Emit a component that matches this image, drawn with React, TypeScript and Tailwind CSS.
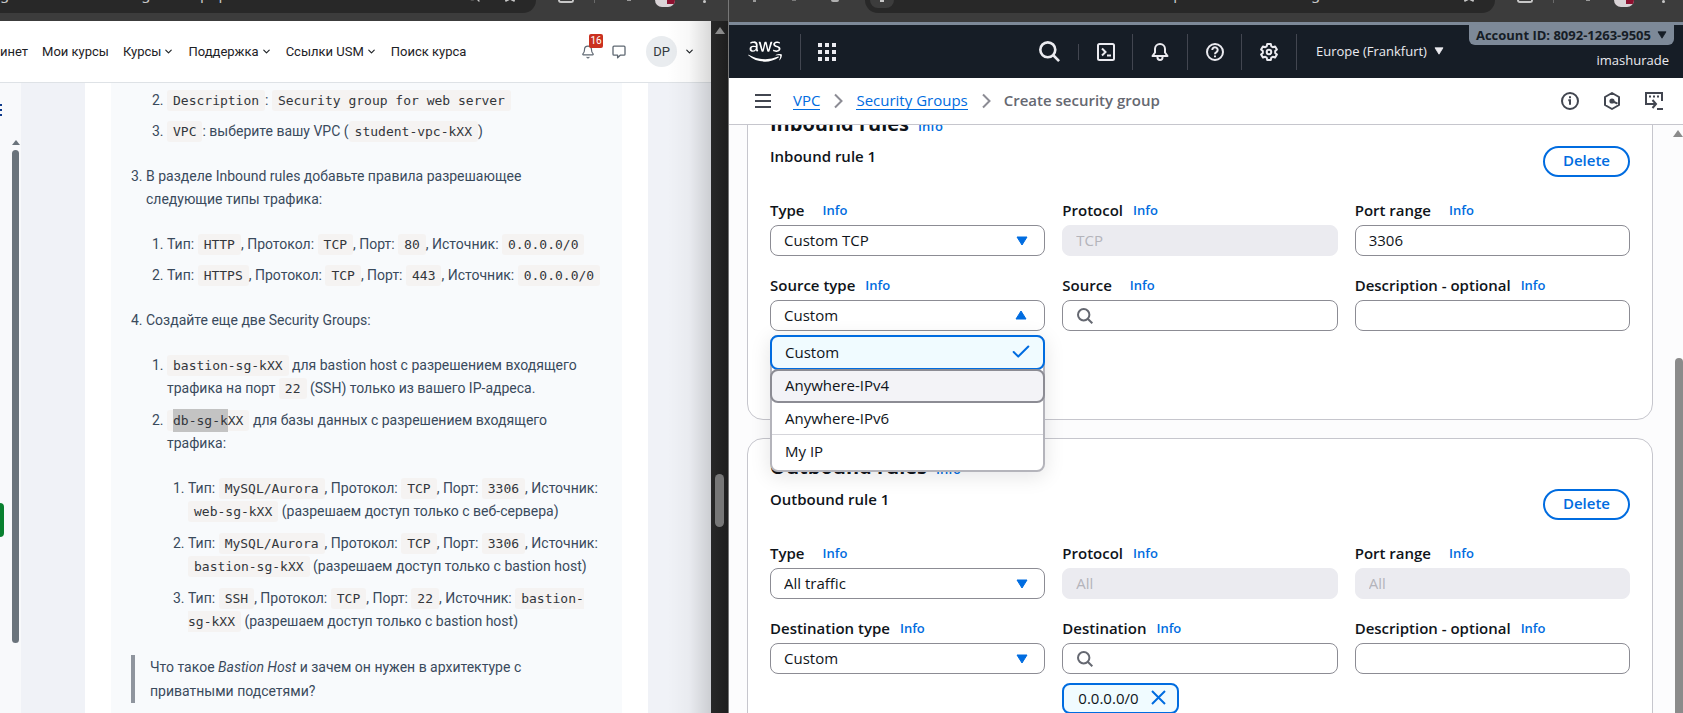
import React, { useId } from "react";
import type { ReactNode } from "react";
import { FaAws } from "react-icons/fa";
import { Bell, Check, ChevronDown, Search, Star } from "lucide-react";

/* ---------- Browser chrome ---------- */

function ToolbarEnd() {
  return (
    <div className="flex shrink-0 items-start">
      <span className="ml-[22px] h-[3px] w-4 rounded-b-sm border-x-2 border-b-2 border-[#c7c7c7]" />
      <span className="ml-5 h-[3px] w-px bg-[#6a6a6a]" />
      <span className="ml-8 h-px w-1 bg-[#9a9a9a]" />
      <span className="ml-6 h-[7px] w-5 overflow-hidden rounded-b-full bg-[#d9d3d6]">
        <span className="ml-auto block h-1 w-2 bg-[#8d1230]" />
      </span>
      <span className="ml-7 h-[3px] w-[3px] rounded-full bg-[#c7c7c7]" />
    </div>
  );
}

/* ---------- Course site (left window) ---------- */

function Code({ children }: { children: ReactNode }) {
  return (
    <code className="rounded-[3px] bg-[#f5f3f2] px-[6px] py-[3px] font-['DejaVu_Sans_Mono',monospace] text-[13px] text-[#33363b]">
      {children}
    </code>
  );
}

function NavLink({ children, menu }: { children: ReactNode; menu?: boolean }) {
  return (
    <a href="#" className="flex items-center gap-[2px] whitespace-nowrap">
      {children}
      {menu && <ChevronDown className="h-[11px] w-[11px]" strokeWidth={2.5} />}
    </a>
  );
}

function CourseHeader() {
  return (
    <header className="flex h-[62px] shrink-0 items-center border-b border-[#dee2e6] bg-white pr-4 text-[13px] text-[#1d2125]">
      <nav className="flex flex-1 items-center gap-[14px]">
        <NavLink>инет</NavLink>
        <NavLink>Мои курсы</NavLink>
        <NavLink menu>Курсы</NavLink>
        <NavLink menu>Поддержка</NavLink>
        <NavLink menu>Ссылки USM</NavLink>
        <NavLink>Поиск курса</NavLink>
      </nav>
      <button className="relative text-[#5f6872]">
        <Bell className="h-[14px] w-[14px]" strokeWidth={2} />
        <span className="absolute -top-[11px] left-2 flex h-[14px] w-[14px] items-center justify-center rounded-[2px] bg-[#ca3120] text-[10px] leading-none text-white">
          16
        </span>
      </button>
      <button className="ml-[17px] text-[#5f6872]">
        <svg viewBox="0 0 14 14" className="h-[14px] w-[14px]" fill="none" stroke="currentColor" strokeWidth="1.3">
          <path d="M2 1.2h10q1 0 1 1v7q0 1-1 1H8.2L5.6 12.8V10.200H2q-1 0-1-1v-7q0-1 1-1z" strokeLinejoin="round" />
        </svg>
      </button>
      <button className="ml-5 flex items-center gap-[7px]">
        <span className="flex h-[31px] w-[31px] items-center justify-center rounded-full bg-[#e9ecef] text-[13px] text-[#343a40]">DP</span>
        <ChevronDown className="h-[11px] w-[11px]" strokeWidth={2.5} />
      </button>
    </header>
  );
}

function CourseText() {
  return (
    <article className="min-w-0 flex-1 overflow-hidden whitespace-nowrap bg-[#f8fafc] pl-5 pt-[6px] text-[14px] leading-[23px] text-[#3a4a5c]">
      <ol start={2} className="list-decimal space-y-2 pl-9">
        <li><Code>Description</Code>: <Code>Security group for web server</Code></li>
        <li><Code>VPC</Code>: выберите вашу VPC (<Code>student-vpc-kXX</Code>)</li>
      </ol>
      <ol start={3} className="mt-[22px] list-decimal space-y-[22px] pl-[15px]">
        <li>
          В разделе Inbound rules добавьте правила разрешающее<br />
          следующие типы трафика:
          <ol className="mt-[22px] list-decimal space-y-2 pl-[21px]">
            <li>Тип: <Code>HTTP</Code>, Протокол: <Code>TCP</Code>, Порт: <Code>80</Code>, Источник: <Code>0.0.0.0/0</Code></li>
            <li>Тип: <Code>HTTPS</Code>, Протокол: <Code>TCP</Code>, Порт: <Code>443</Code>, Источник: <Code>0.0.0.0/0</Code></li>
          </ol>
        </li>
        <li>
          Создайте еще две Security Groups:
          <ol className="mt-[22px] list-decimal space-y-[9px] pl-[21px]">
            <li>
              <Code>bastion-sg-kXX</Code> для bastion host с разрешением входящего<br />
              трафика на порт <Code>22</Code> (SSH) только из вашего IP-адреса.
            </li>
            <li>
              <Code><mark className="bg-[#c3c3c3] py-1 text-inherit">db-sg-k</mark>XX</Code> для базы данных с разрешением входящего<br />
              трафика:
              <ol className="mt-[22px] list-decimal space-y-[9px] pl-[21px]">
                <li>
                  Тип: <Code>MySQL/Aurora</Code>, Протокол: <Code>TCP</Code>, Порт: <Code>3306</Code>, Источник:<br />
                  <Code>web-sg-kXX</Code> (разрешаем доступ только с веб-сервера)
                </li>
                <li>
                  Тип: <Code>MySQL/Aurora</Code>, Протокол: <Code>TCP</Code>, Порт: <Code>3306</Code>, Источник:<br />
                  <Code>bastion-sg-kXX</Code> (разрешаем доступ только с bastion host)
                </li>
                <li>
                  Тип: <Code>SSH</Code>, Протокол: <Code>TCP</Code>, Порт: <Code>22</Code>, Источник: <Code>bastion-<br />sg-kXX</Code> (разрешаем доступ только с bastion host)
                </li>
              </ol>
            </li>
          </ol>
        </li>
      </ol>
      <blockquote className="mt-[22px] border-l-4 border-[#8f959e] pl-[15px] leading-[24px]">
        Что такое <em>Bastion Host</em> и зачем он нужен в архитектуре с<br />
        приватными подсетями?
      </blockquote>
    </article>
  );
}

function CourseWindow() {
  return (
    <section className="flex min-w-0 flex-col overflow-hidden font-[Roboto,sans-serif]">
      <div className="flex h-[21px] shrink-0 items-start bg-[#3c3c3c]">
        <div className="flex h-[13px] min-w-0 flex-1 items-start overflow-hidden rounded-br-[13px] bg-[#282828] pr-[18px]">
          <span className="-mt-[17px] flex-1 whitespace-nowrap font-['Noto_Sans',sans-serif] text-[15px] leading-[21px] text-[#c7c7c7]">
            g.usm.md/mod/assign/view.php
          </span>
          <Search className="-mt-[13px] mr-[21px] h-4 w-4 text-[#c7c7c7]" />
          <Star className="-mt-[13px] h-4 w-4 text-[#c7c7c7]" />
        </div>
        <div className="mr-[22px]"><ToolbarEnd /></div>
      </div>
      <div className="flex min-h-0 flex-1">
        <div className="relative flex min-w-0 flex-1 flex-col">
          <CourseHeader />
          <div className="flex min-h-0 flex-1 bg-[#f0f2f7]">
            <aside className="flex w-[21px] shrink-0 bg-[#f8f9fb]">
              <div className="flex w-3 flex-col items-start">
                <svg viewBox="0 0 2 12" className="mt-[21px] h-3 w-[2px]" fill="#0f3a8c">
                  <rect width="2" height="2" />
                  <rect y="5" width="2" height="2" />
                  <rect y="10" width="2" height="2" />
                </svg>
                <span className="mt-[387px] h-[34px] w-1 rounded-r-md bg-[#08802f]" />
              </div>
              <div className="flex w-[7px] flex-col items-center">
                <span className="mt-[57px] border-x-[4px] border-b-[5px] border-x-transparent border-b-[#6a737b]" />
                <span className="mt-[5px] h-[493px] w-full rounded-full bg-[#6a737b]" />
              </div>
            </aside>
            <main className="ml-16 mr-[63px] flex min-w-0 flex-1 bg-white px-[26px]">
              <CourseText />
            </main>
          </div>
          <div className="pointer-events-none absolute inset-y-0 right-0 w-11 bg-linear-to-r from-transparent via-black/3 to-black/15" />
        </div>
        <div className="flex w-[17px] shrink-0 flex-col items-center bg-linear-to-r from-[#282828] to-[#1e1e1e]">
          <span className="mt-[6px] border-x-[5px] border-b-[7px] border-x-transparent border-b-[#8b8b8b]" />
          <span className="mt-[440px] h-[53px] w-[9px] rounded-full bg-[#777777]" />
        </div>
      </div>
    </section>
  );
}

/* ---------- AWS console (right window) ---------- */

const FIELD = "h-[31px] w-full rounded-lg px-[13px] pb-[2px] text-[15px]";

function Label({ id, text, wide }: { id: string; text: string; wide?: boolean }) {
  return (
    <div className={`flex h-[22px] items-center pb-px ${wide ? "gap-[18px]" : "gap-[10px]"}`}>
      <label htmlFor={id} className="whitespace-nowrap font-semibold">{text}</label>
      <a href="#" className="text-[13px] font-semibold text-[#006ce0]">Info</a>
    </div>
  );
}

type FieldProps = { label: string; wide?: boolean; children: (id: string) => ReactNode };

function Field({ label, wide, children }: FieldProps) {
  const id = useId();
  return (
    <div className="flex min-w-0 flex-col gap-1">
      <Label id={id} text={label} wide={wide} />
      {children(id)}
    </div>
  );
}

function Triangle({ up, className }: { up?: boolean; className: string }) {
  return (
    <svg viewBox="0 0 12 10" className={className} fill="currentColor" stroke="currentColor" strokeLinejoin="round">
      <path d={up ? "M6 1 11 9H1z" : "M1 1h10L6 9z"} />
    </svg>
  );
}

function Magnifier({ className }: { className: string }) {
  return (
    <svg viewBox="0 0 16 16" className={className} fill="none" stroke="currentColor" strokeWidth="2">
      <circle cx="6.700" cy="6.700" r="5.700" />
      <path d="M10.700 10.700 15.300 15.300" />
    </svg>
  );
}

function SelectField({ label, value, wide }: { label: string; value: string; wide?: boolean }) {
  return (
    <Field label={label} wide={wide}>
      {(id) => (
        <div className="relative">
          <select id={id} className={`${FIELD} block appearance-none border border-[#8c8c94] bg-white`}>
            <option>{value}</option>
          </select>
          <Triangle className="pointer-events-none absolute right-[17px] top-[11px] h-[10px] w-3 text-[#006ce0]" />
        </div>
      )}
    </Field>
  );
}

function OpenSelectField() {
  return (
    <Field label="Source type">
      {(id) => (
        <div className="relative">
          <button id={id} aria-haspopup="listbox" aria-expanded="true" className={`${FIELD} flex items-center justify-between border border-[#8c8c94] bg-white pr-[17px]`}>
            Custom
            <Triangle up className="h-[10px] w-3 text-[#006ce0]" />
          </button>
          <ul role="listbox" className="absolute inset-x-0 top-[35px] z-10 h-[137px] rounded-lg border-2 border-[#b4b4bb] bg-white shadow-[0_4px_20px_1px_rgba(0,7,22,0.10)]">
            <li role="option" aria-selected="true" className="-mx-[2px] -mt-[2px] flex h-[35px] items-center justify-between rounded-lg border-2 border-[#006ce0] bg-[#f0fbff] pb-[2px] pl-[13px] pr-[11px]">
              Custom
              <Check className="h-[22px] w-[22px] text-[#006ce0]" strokeWidth={2.2} />
            </li>
            <li role="option" aria-selected="false" className="-mx-[2px] -mt-px flex h-[34px] items-center rounded-lg border-2 border-[#8c8c94] bg-[#f3f3f7] px-[13px] pb-[2px]">
              Anywhere-IPv4
            </li>
            <li role="option" aria-selected="false" className="flex h-8 items-center border-b border-[#d5d5da] px-[13px] pb-[2px]">Anywhere-IPv6</li>
            <li role="option" aria-selected="false" className="flex h-[34px] items-center px-[13px] pb-[2px]">My IP</li>
          </ul>
        </div>
      )}
    </Field>
  );
}

function InputField({ label, value, wide, disabled }: { label: string; value?: string; wide?: boolean; disabled?: boolean }) {
  return (
    <Field label={label} wide={wide}>
      {(id) => (
        <input
          id={id}
          defaultValue={value}
          disabled={disabled}
          className={`${FIELD} border border-[#8c8c94] bg-white disabled:border-[#ebebf0] disabled:bg-[#ebebf0] disabled:text-[#b4b4bb]`}
        />
      )}
    </Field>
  );
}

function SearchField({ label, wide, token }: { label: string; wide?: boolean; token?: string }) {
  return (
    <Field label={label} wide={wide}>
      {(id) => (
        <>
          <div className="flex h-[31px] items-center rounded-lg border border-[#8c8c94] bg-white px-[14px]">
            <Magnifier className="h-4 w-4 shrink-0 text-[#656871]" />
            <input id={id} className="ml-2 min-w-0 flex-1 outline-none" />
          </div>
          {token && (
            <div className="mt-[5px] flex h-[31px] items-center gap-3 self-start rounded-lg border-2 border-[#006ce0] bg-[#f0fbff] pb-[2px] pl-[14px] pr-[11px]">
              {token}
              <button aria-label={token}>
                <svg viewBox="0 0 15 15" className="block h-[15px] w-[15px] text-[#006ce0]" fill="none" stroke="currentColor" strokeWidth="2">
                  <path d="M1 1l13 13M14 1 1 14" />
                </svg>
              </button>
            </div>
          )}
        </>
      )}
    </Field>
  );
}

function RulePanel({ title, rule, tall, children }: { title: string; rule: string; tall?: boolean; children: ReactNode }) {
  return (
    <section className={`rounded-2xl border border-[#c6c6cd] bg-white px-[22px] pt-4 ${tall ? "pb-[88px]" : "pb-10"}`}>
      <div className="flex h-6 items-center gap-[9px]">
        <h2 className="text-[20px] font-bold leading-6">{title}</h2>
        <a href="#" className="mt-1 text-[13px] font-semibold text-[#006ce0]">Info</a>
      </div>
      <div className="mt-[10px] flex items-start justify-between">
        <h3 className="font-semibold leading-5">{rule}</h3>
        <button className="h-[31px] rounded-full border-2 border-[#006ce0] px-[18px] pb-[2px] font-semibold leading-none text-[#006ce0]">Delete</button>
      </div>
      <div className="mt-[22px] grid grid-cols-3 gap-x-[17px] gap-y-[18px]">{children}</div>
    </section>
  );
}

function Divider({ short }: { short?: boolean }) {
  return <span className={`w-px shrink-0 bg-[#424650] ${short ? "h-4" : "h-9"}`} />;
}

function ConsoleHeader() {
  return (
    <header className="flex h-14 shrink-0 border-t-[3px] border-[#7d8998] bg-[#161d26] text-[#ebebf0]">
      <div className="flex flex-1 items-center">
        <a href="#" aria-label="AWS" className="ml-[19px]"><FaAws className="h-[27px] w-[34px] text-white" /></a>
        <span className="ml-[18px] flex"><Divider /></span>
        <button className="ml-[17px]">
          <svg viewBox="0 0 18 18" className="h-[18px] w-[18px]" fill="currentColor">
            {[0, 7, 14].flatMap((x) => [0, 7, 14].map((y) => <rect key={`${x}-${y}`} x={x} y={y} width="4" height="4" />))}
          </svg>
        </button>
        <div className="flex-1" />
        <button><Magnifier className="h-[21px] w-[21px]" /></button>
        <span className="ml-[18px] flex"><Divider short /></span>
        <button className="ml-[18px]">
          <svg viewBox="0 0 18 18" className="h-[18px] w-[18px]" fill="none" stroke="currentColor" strokeWidth="2">
            <rect x="1" y="1" width="16" height="16" rx="1.500" />
            <path d="M5 5.500 8.500 9 5 12.500M10 12.500h4" />
          </svg>
        </button>
        <span className="ml-[17px] flex"><Divider /></span>
        <button className="ml-[18px]">
          <svg viewBox="0 0 18 18" className="h-[18px] w-[18px]" fill="none" stroke="currentColor" strokeWidth="2" strokeLinejoin="round">
            <path d="M9 1a5 5 0 0 0-5 5v3.500L1.500 13h15L14 9.500V6a5 5 0 0 0-5-5z" />
            <path d="M6.500 14v.5a2.500 2.500 0 0 0 5 0V14" />
          </svg>
        </button>
        <span className="ml-[18px] flex"><Divider /></span>
        <button className="ml-[18px]">
          <svg viewBox="0 0 18 18" className="h-[18px] w-[18px]" fill="none" stroke="currentColor" strokeWidth="2">
            <circle cx="9" cy="9" r="8" />
            <path d="M6.300 7a2.700 2.700 0 1 1 4.200 2.200C9.400 9.900 9 10.300 9 11.200M9 12.500v1.700" />
          </svg>
        </button>
        <span className="ml-[17px] flex"><Divider /></span>
        <button className="ml-[18px]">
          <svg viewBox="0 0 18 18" className="h-[18px] w-[18px]" fill="none" stroke="currentColor" strokeWidth="2" strokeLinejoin="round">
            <path d="M7.200 1h3.600l.5 2.300 1.500.9 2.300-.8 1.800 3.100L15.200 8.100v1.800l1.700 1.600-1.800 3.100-2.300-.8-1.500.9-.5 2.300H7.200l-.5-2.300-1.500-.9-2.300.8-1.800-3.100 1.700-1.600V8.100L1.100 6.500l1.800-3.100 2.300.8 1.500-.9z" />
            <circle cx="9" cy="9" r="2.300" />
          </svg>
        </button>
        <span className="ml-[18px] flex"><Divider /></span>
        <button className="ml-[19px] flex items-center gap-[7px] whitespace-nowrap pb-px text-[13px] font-medium">
          Europe (Frankfurt)
          <Triangle className="h-2 w-[10px]" />
        </button>
      </div>
      <div className="ml-[25px] mr-[9px] flex shrink-0 flex-col items-end gap-1">
        <button className="flex h-5 items-center gap-[6px] rounded-b-md bg-[#7d8998] px-[7px] text-[13px] font-bold text-[#161d26]">
          Account ID: 8092-1263-9505
          <Triangle className="h-2 w-[10px]" />
        </button>
        <span className="mr-[5px] text-[13px] font-medium">imashurade</span>
      </div>
    </header>
  );
}

function Chevron() {
  return (
    <svg viewBox="0 0 18 18" className="h-[18px] w-[18px] text-[#8c8c94]" fill="none" stroke="currentColor" strokeWidth="2">
      <path d="M6 2.500 12.500 9 6 15.500" />
    </svg>
  );
}

function Breadcrumbs() {
  return (
    <div className="flex h-[47px] shrink-0 items-center border-b border-[#c6c6cd] bg-white pb-px pl-[26px] pr-5 text-[#424650]">
      <button className="flex w-4 flex-col gap-1">
        <span className="h-[2px] bg-current" />
        <span className="h-[2px] bg-current" />
        <span className="h-[2px] bg-current" />
      </button>
      <nav className="ml-[22px] flex flex-1 items-center gap-[9px] whitespace-nowrap leading-[18px]">
        <a href="#" className="border-b border-[#006ce0] text-[#006ce0]">VPC</a>
        <Chevron />
        <a href="#" className="border-b border-[#006ce0] text-[#006ce0]">Security Groups</a>
        <Chevron />
        <span className="border-b border-transparent font-semibold text-[#656871]">Create security group</span>
      </nav>
      <div className="flex items-center gap-6">
        <button>
          <svg viewBox="0 0 18 18" className="h-[18px] w-[18px]" fill="none" stroke="currentColor" strokeWidth="2">
            <circle cx="9" cy="9" r="8" />
            <path d="M9 4.300v2M7.300 8.200H9v4.600" />
          </svg>
        </button>
        <button>
          <svg viewBox="0 0 18 18" className="h-[18px] w-[18px]" fill="none" stroke="currentColor" strokeWidth="2" strokeLinejoin="round">
            <path d="M9 1l7 4v8l-7 4-7-4V5z" />
            <circle cx="9" cy="9" r="2.600" fill="currentColor" stroke="none" />
            <path d="M9 9l5.500 2.600" />
          </svg>
        </button>
        <button>
          <svg viewBox="0 0 18 18" className="h-[18px] w-[18px]" fill="none" stroke="currentColor" strokeWidth="2">
            <path d="M5 12H1V1h16v8" />
            <path d="M4 4.500h2M8 4.500h2M12 4.500h2" />
            <path d="M4.500 12H10M7.500 8l3.500 4-3.500 4M12 17h6" />
          </svg>
        </button>
      </div>
    </div>
  );
}

function ConsoleWindow() {
  return (
    <section className="flex min-w-0 flex-col overflow-hidden border-l border-[#777777] bg-white font-['Open_Sans',sans-serif] text-[15px] leading-[22px] text-[#0f141a]">
      <div className="flex h-[22px] shrink-0 items-start bg-[#3c3c3c]">
        <span className="ml-6 h-[2px] w-[3px] bg-[#9a9a9a]" />
        <span className="ml-9 h-px w-1 bg-[#7a7a7a]" />
        <span className="ml-[35px] h-[2px] w-2 rounded-b-full bg-[#b0b0b0]" />
        <div className="ml-[26px] flex h-[13px] min-w-0 flex-1 items-start overflow-hidden rounded-b-[13px] bg-[#282828] pl-[5px] pr-[18px]">
          <span className="flex h-2 w-6 justify-center rounded-b-full bg-[#3c3c3c]">
            <span className="h-[2px] w-1 bg-[#c7c7c7]" />
          </span>
          <span className="-mt-[17px] flex-1 whitespace-nowrap pl-[266px] font-['Noto_Sans',sans-serif] leading-[21px] text-[#c7c7c7]">
            /vpcconsole/home?region
          </span>
          <Star className="-mt-[13px] h-4 w-4 text-[#c7c7c7]" />
        </div>
        <div className="mr-[18px]"><ToolbarEnd /></div>
      </div>
      <ConsoleHeader />
      <Breadcrumbs />
      <div className="flex min-h-0 flex-1 bg-[#fcfcfd]">
        <main className="min-w-0 flex-1 overflow-hidden pl-[18px] pr-5">
          <div className="-mt-[30px] flex flex-col gap-[18px]">
            <RulePanel title="Inbound rules" rule="Inbound rule 1" tall>
              <SelectField label="Type" value="Custom TCP" wide />
              <InputField label="Protocol" value="TCP" disabled />
              <InputField label="Port range" value="3306" wide />
              <OpenSelectField />
              <SearchField label="Source" wide />
              <InputField label="Description - optional" />
            </RulePanel>
            <RulePanel title="Outbound rules" rule="Outbound rule 1">
              <SelectField label="Type" value="All traffic" wide />
              <InputField label="Protocol" value="All" disabled />
              <InputField label="Port range" value="All" wide disabled />
              <SelectField label="Destination type" value="Custom" />
              <SearchField label="Destination" token="0.0.0.0/0" />
              <InputField label="Description - optional" />
            </RulePanel>
          </div>
        </main>
        <div className="flex w-[10px] shrink-0 flex-col items-end">
          <span className="mt-[5px] border-x-[5px] border-b-[7px] border-x-transparent border-b-[#8b8b8b]" />
          <span className="mt-[221px] w-2 flex-1 rounded-t-full bg-[#8b8b8b]" />
        </div>
      </div>
    </section>
  );
}

export default function App() {
  return (
    <div className="grid h-screen grid-cols-[728fr_955fr] overflow-hidden bg-[#282828]">
      <CourseWindow />
      <ConsoleWindow />
    </div>
  );
}
